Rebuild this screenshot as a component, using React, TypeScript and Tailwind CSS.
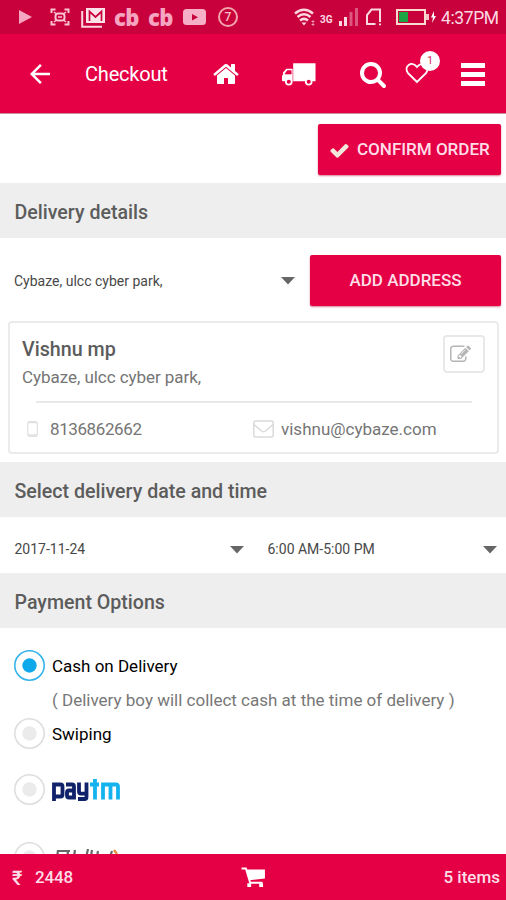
import React, { useState } from 'react';
import { MdArrowBack } from 'react-icons/md';

const PATHS = {
  home: 'M1472 992v480q0 26-19 45t-45 19h-384v-384h-256v384h-384q-26 0-45-19t-19-45v-480q0-1 .5-3t.5-3l575-474 575 474q1 2 1 6zm223-69l-62 74q-8 9-21 11h-3q-13 0-21-7l-692-577-692 577q-12 8-24 7-13-2-21-11l-62-74q-8-10-7-23.5t11-21.5l719-599q32-26 76-26t76 26l244 204v-195q0-14 9-23t23-9h192q14 0 23 9t9 23v408l219 182q10 8 11 21.5t-7 23.5z',
  search:
    'M1216 832q0-185-131.5-316.5t-316.5-131.5-316.5 131.5-131.5 316.5 131.5 316.5 316.5 131.5 316.5-131.5 131.5-316.5zm512 832q0 52-38 90t-90 38q-54 0-90-38l-343-342q-179 124-399 124-143 0-273.5-55.5t-225-150-150-225-55.500-273.5 55.5-273.5 150-225 225-150 273.5-55.5 273.5 55.5 225 150 150 225 55.5 273.5q0 220-124 399l343 343q37 37 37 90z',
  check:
    'M1671 566q0 40-28 68l-724 724-136 136q-28 28-68 28t-68-28l-136-136-362-362q-28-28-28-68t28-68l136-136q28-28 68-28t68 28l294 295 656-657q28-28 68-28t68 28l136 136q28 28 28 68z',
  edit: 'M888 1184l116-116-152-152-116 116v56h96v96h56zm440-720q-16-16-33 1l-350 350q-17 17-1 33t33-1l350-350q17-17 1-33zm80 594v190q0 119-84.5 203.5t-203.5 84.5h-832q-119 0-203.5-84.5t-84.5-203.5v-832q0-119 84.5-203.5t203.5-84.5h832q63 0 117 25 15 7 18 23 3 17-9 29l-49 49q-14 14-32 8-23-6-45-6h-832q-66 0-113 47t-47 113v832q0 66 47 113t113 47h832q66 0 113-47t47-113v-126q0-13 9-22l64-64q15-15 35-7t20 29zm-96-738l288 288-672 672h-288v-288zm444 132l-92 92-288-288 92-92q28-28 68-28t68 28l152 152q28 28 28 68t-28 68z',
};

function Glyph({ name, className }: { name: keyof typeof PATHS; className: string }) {
  return (
    <svg viewBox="0 0 1792 1792" fill="currentColor" className={className}>
      <path d={PATHS[name]} />
    </svg>
  );
}

function Truck() {
  return (
    <svg width="34" height="23" viewBox="0 0 35 23" className="ml-[42px] shrink-0">
      <path d="M11.500 0H34.500v18.500H1q-1 0-1-1V13l1-1.500V9.500l3.500-4h7z" fill="#fff" />
      <path d="M3 11l2.500-3.500h4V11zM11.200 5v13.500" fill="#e50046" stroke="#e50046" strokeWidth=".6" />
      <circle cx="7" cy="19" r="3" fill="#e50046" stroke="#fff" strokeWidth="1.800" />
      <circle cx="27.500" cy="19" r="3" fill="#e50046" stroke="#fff" strokeWidth="1.800" />
    </svg>
  );
}

function StatusBar() {
  return (
    <div className="flex h-[34px] shrink-0 items-center justify-between bg-[#c8003b] pl-[18px] pr-2 text-[#f5a5c0]">
      <div className="flex items-center">
        <svg width="14" height="16" viewBox="0 0 14 16" fill="currentColor">
          <path d="M1 1l13 7-13 7z" />
        </svg>
        <svg width="20" height="18" viewBox="0 0 20 18" fill="none" stroke="#f8c4d3" strokeWidth="2" className="ml-[18px]">
          <path d="M1.500 5V1.500h4M14.500 1.500h4V5M18.500 13v3.500h-4M5.500 16.500h-4V13" />
          <path d="M4 4l2.500 2M16 4l-2.500 2M4 14l2.500-2M16 14l-2.500-2" strokeWidth="1.500" />
          <rect x="5.500" y="5.500" width="9" height="7" rx="2.500" />
          <path d="M8 9h4" strokeWidth="1.500" />
        </svg>
        <svg width="25" height="21" viewBox="0 0 25 21" className="ml-[11px]">
          <path d="M1.200 4v15.700H21" fill="none" stroke="#fbd5df" strokeWidth="2" />
          <rect x="5" y="1" width="19" height="15" fill="#fbe3e9" />
          <path d="M8.500 14V4.500l6 5.500 6-5.500V14" fill="none" stroke="#c8003b" strokeWidth="1.700" />
        </svg>
        <span className="ml-[8px] w-[26px] font-['Open_Sans',sans-serif] text-[22px] font-extrabold leading-[30px] tracking-[-0.500px]">cb</span>
        <span className="ml-[8px] w-[26px] font-['Open_Sans',sans-serif] text-[22px] font-extrabold leading-[30px] tracking-[-0.500px]">cb</span>
        <svg width="23" height="16" viewBox="0 0 23 16" className="ml-[9px]">
          <rect width="23" height="16" rx="3.500" fill="#f5b0c7" />
          <path d="M9 5l6 3.200-6 3.200z" fill="#c8003b" />
        </svg>
        <span className="ml-[12px] flex size-5 items-center justify-center rounded-full border-2 border-[#f3a3ad] text-[12px] font-medium leading-none text-[#f8c0cc]">
          7
        </span>
      </div>
      <div className="flex items-center text-[#fbd9e2]">
        <svg width="22" height="19" viewBox="0 0 22 19" fill="none" stroke="currentColor" strokeWidth="2.600">
          <path d="M1 5.500q9-7.500 18 0M3.500 9q6.500-5.500 13 0M6 12.500q4-3.200 8 0" />
          <path d="M7.500 14.500h5L10 17.500z" fill="currentColor" stroke="none" />
          <path d="M19 12v6M17.500 13.500h3M17.500 16.500h3" strokeWidth="1" opacity=".6" />
        </svg>
        <span className="ml-[4px] mt-[6px] w-[15px] text-[10px] font-bold leading-none">3G</span>
        <svg width="20" height="18" viewBox="0 0 20 18" fill="currentColor" className="ml-[4px]">
          <path d="M0 13h3v5H0zM5 9h3v9H5z" />
          <path d="M10.500 4h3v14h-3zM16 0h3v18h-3z" opacity=".4" />
        </svg>
        <svg width="17" height="18" viewBox="0 0 17 18" fill="none" stroke="currentColor" strokeWidth="2" className="ml-[6px]">
          <path d="M10.500 16H2V7l4.500-5.500H15V10" />
          <path d="M15 10v4M15 15.500v1.800" />
        </svg>
        <svg width="40" height="16" viewBox="0 0 40 16" className="ml-[14px]">
          <rect x="1" y="1" width="28" height="14" fill="none" stroke="#f9dccf" strokeWidth="2" />
          <rect x="3" y="3" width="9" height="10" fill="#1ea345" />
          <path d="M30 5h3v6h-3z" fill="#f5c5c5" />
          <path d="M38 2l-3 6.500h2L36 14l4-7h-2z" fill="#fff" />
        </svg>
        <span className="ml-[5px] mt-[3px] w-[57px] whitespace-nowrap text-[17.500px] leading-none tracking-[-0.400px]">4:37PM</span>
      </div>
    </div>
  );
}

function Header() {
  return (
    <header className="flex h-[80px] shrink-0 items-center border-b border-[#c88fa0] bg-[#e50046] pl-[25px] pr-5 pt-px text-white">
      <MdArrowBack className="size-[30px] shrink-0" />
      <h1 className="ml-[30px] w-[84px] whitespace-nowrap text-[20px] leading-6 tracking-[-0.200px]">Checkout</h1>
      <Glyph name="home" className="ml-[43px] size-[28px] shrink-0" />
      <Truck />
      <Glyph name="search" className="ml-[43px] size-[28px] shrink-0" />
      <div className="relative ml-[18px] -mt-[3px]">
        <svg width="24" height="22" viewBox="0 0 24 22" fill="none" stroke="currentColor" strokeWidth="1.900" className="block">
          <path d="M12 20L2.800 10.800C-1.500 4.500 6.500-1.800 12 5c5.500-6.800 13.500-.5 9.200 5.800z" />
        </svg>
        <span className="absolute -top-[11px] left-[15px] flex size-5 items-center justify-center rounded-full bg-white text-[11px] leading-none text-[#d5305f]">
          1
        </span>
      </div>
      <div className="ml-auto mr-px flex w-[24px] flex-col gap-[4px]">
        <i className="h-[5px] bg-white" />
        <i className="h-[5px] bg-white" />
        <i className="h-[5px] bg-white" />
      </div>
    </header>
  );
}

function SectionTitle({ children }: { children: React.ReactNode }) {
  return (
    <h2 className="flex h-[55px] shrink-0 items-center bg-[#eee] px-[14.500px] pt-[4px] text-[19.600px] font-medium text-[#5c5c5c]">
      {children}
    </h2>
  );
}

function Caret() {
  return (
    <svg width="14" height="8" viewBox="0 0 14 8" className="shrink-0 fill-[#666]">
      <path d="M0 0h14L7 7.500z" />
    </svg>
  );
}

function Radio({ checked, onClick }: { checked: boolean; onClick: () => void }) {
  return (
    <button onClick={onClick} className="shrink-0">
      <svg width="31" height="31" viewBox="0 0 31 31" className="block">
        <circle cx="15.500" cy="15.500" r="14.700" fill="none" strokeWidth="1.600" className={checked ? 'stroke-[#35b3ea]' : 'stroke-[#dedede]'} />
        <circle cx="15.500" cy="15.500" r="7.200" className={checked ? 'fill-[#0fa8ea]' : 'fill-[#ebebeb]'} />
      </svg>
    </button>
  );
}

function PaytmLogo() {
  return (
    <svg width="68" height="24" viewBox="0 0 68 24" fill="none" strokeWidth="3.800" className="mt-[3px]">
      <g stroke="#10226a">
        <path d="M2 22V5.500h6.500q2 0 2 2v8q0 2-2 2H2" />
        <path d="M14 5.500h6q2 0 2 2v11h-5q-2 0-2-2v-3q0-2 2-2h5" />
        <path d="M27 3.600v9q0 2 2 2h5M34.500 3.600v14.400q0 2-2 2H26" />
      </g>
      <g stroke="#12b3ee">
        <path d="M43 0v20.500M38 5.500h9M51 20.500v-15h12.500q2.500 0 2.500 2v13M58.500 5v15.500" />
      </g>
    </svg>
  );
}

export default function App() {
  const [payment, setPayment] = useState('cod');

  return (
    <div className="flex h-[900px] w-[506px] flex-col overflow-hidden bg-white font-[Roboto,sans-serif]">
      <StatusBar />
      <Header />

      <main className="flex min-h-0 flex-1 flex-col overflow-hidden">
        <div className="flex h-[69px] shrink-0 justify-end pr-[5px] pt-[10px]">
          <button className="flex h-[51px] w-[183px] items-center rounded-[2px] bg-[#e50046] pl-[11px] pt-px text-[17.100px] font-medium text-[#ffdde6] shadow-[0_1px_2px_#d9809a]">
            <Glyph name="check" className="size-[21px] text-[#f3e6da]" />
            <span className="ml-[7px] whitespace-nowrap tracking-[-0.050px]">CONFIRM ORDER</span>
          </button>
        </div>

        <SectionTitle>Delivery details</SectionTitle>
        <div className="flex h-[83px] shrink-0 items-center pl-[14px] pr-[5px] pt-[2px]">
          <span className="flex-1 pt-[2px] text-[14px] text-[#484848]">Cybaze, ulcc cyber park,</span>
          <Caret />
          <button className="ml-[15px] h-[51px] w-[191px] rounded-[2px] bg-[#e50046] pt-px text-[17px] font-medium text-[#ffdde6] shadow-[0_1px_2px_#d9809a]">
            ADD ADDRESS
          </button>
        </div>

        <section className="mx-[8px] mr-[7px] h-[133px] shrink-0 rounded-[4px] border-2 border-[#ebebeb] px-3 text-[#757575]">
          <div className="flex h-[78px] justify-between">
            <div className="pt-[14px]">
              <h3 className="text-[19.700px] font-medium leading-[25px] text-[#5c5c5c]">Vishnu mp</h3>
              <p className="mt-[3px] text-[17px] leading-6 tracking-[-0.050px]">Cybaze, ulcc cyber park,</p>
            </div>
            <button className="mt-[12px] flex h-[38px] w-[42px] items-center rounded-[4px] border-2 border-[#e8e8e8] pl-[5px]">
              <Glyph name="edit" className="size-[21px] text-[#b5b5b5]" />
            </button>
          </div>
          <hr className="ml-[14px] mr-[13px] border-t-2 border-[#e8e8e8]" />
          <div className="mt-[14px] flex items-center text-[17px] leading-6">
            <svg width="11" height="16" viewBox="0 0 11 16" className="ml-[5px]" fill="none" stroke="#e0e0e0">
              <rect x=".7" y=".7" width="9.600" height="14.600" rx="2" strokeWidth="1.200" />
              <path d="M1 1.500h9M1 14h9" strokeWidth="1.500" />
            </svg>
            <span className="ml-[12px] w-[203px] tracking-[-0.400px]">8136862662</span>
            <svg width="21" height="18" viewBox="0 0 21 18" fill="none" stroke="#dadada" strokeWidth="1.500">
              <rect x=".8" y="1" width="19.400" height="16" rx="1.500" />
              <path d="M1 4.500l7.500 6.500q2 1.500 4 0L20 4.500" />
            </svg>
            <span className="ml-[7px]">vishnu@cybaze.com</span>
          </div>
        </section>

        <div className="h-2 shrink-0" />
        <SectionTitle>Select delivery date and time</SectionTitle>
        <div className="grid h-[56px] shrink-0 grid-cols-2 items-center pt-[9px] text-[14px] text-[#484848]">
          <div className="flex items-center justify-between pl-[14.500px] pr-[9px]">
            2017-11-24
            <Caret />
          </div>
          <div className="flex items-center justify-between pl-[14.500px] pr-[9px]">
            6:00 AM-5:00 PM
            <Caret />
          </div>
        </div>

        <SectionTitle>Payment Options</SectionTitle>
        <div className="flex flex-col pl-[14px] pt-[22px]">
          <div className="flex items-center gap-[7px]">
            <Radio checked={payment === 'cod'} onClick={() => setPayment('cod')} />
            <span className="pt-[2px] text-[17px] text-black">Cash on Delivery</span>
          </div>
          <p className="ml-[38px] mt-[7px] h-[30px] whitespace-nowrap text-[17px] leading-6 text-[#777]">
            ( Delivery boy will collect cash at the time of delivery )
          </p>
          <div className="flex items-center gap-[7px]">
            <Radio checked={payment === 'swipe'} onClick={() => setPayment('swipe')} />
            <span className="pt-[2px] text-[17px] text-black">Swiping</span>
          </div>
          <div className="mt-[25px] flex items-center gap-[7px]">
            <Radio checked={payment === 'paytm'} onClick={() => setPayment('paytm')} />
            <PaytmLogo />
          </div>
          <div className="mt-[37px] flex h-[31px] gap-[10px]">
            <Radio checked={payment === 'wallet'} onClick={() => setPayment('wallet')} />
            {/* only the top edge of this logo clears the footer */}
            <svg width="66" height="22" viewBox="0 0 66 22" fill="none" stroke="#666" strokeWidth="2.200" className="mt-[7px]">
              <path d="M3 2h12M3 1l-2 18M13 2l-2 16M20 1l-3 18M33 0l-4 18M37 1l-3 18M43 2l-3 17M57 2l-6 17" />
              <path d="M59 1l3 4" stroke="#e08a3a" />
            </svg>
          </div>
        </div>
      </main>

      <footer className="grid h-[46px] shrink-0 grid-cols-3 items-center bg-[#e50046] pl-3 pr-[6px] pt-[2px] text-[17px] font-medium text-[#ffdde6]">
        <div className="flex items-center">
          <span className="w-[23px] text-[20px]">₹</span>
          <span className="tracking-[-0.200px]">2448</span>
        </div>
        <svg width="25" height="20" viewBox="0 0 25 21" className="-ml-1 -mt-[3px] justify-self-center">
          <path d="M0 1.500h4.500L9 16.500h13" fill="none" stroke="#fff" strokeWidth="2" />
          <path d="M5 2.500h19.500V12L8 14z" fill="#fff" />
          <path d="M6 17h4v4H6zM18.500 17h4v4h-4z" fill="#fff" />
        </svg>
        <span className="justify-self-end">5 items</span>
      </footer>
    </div>
  );
}
